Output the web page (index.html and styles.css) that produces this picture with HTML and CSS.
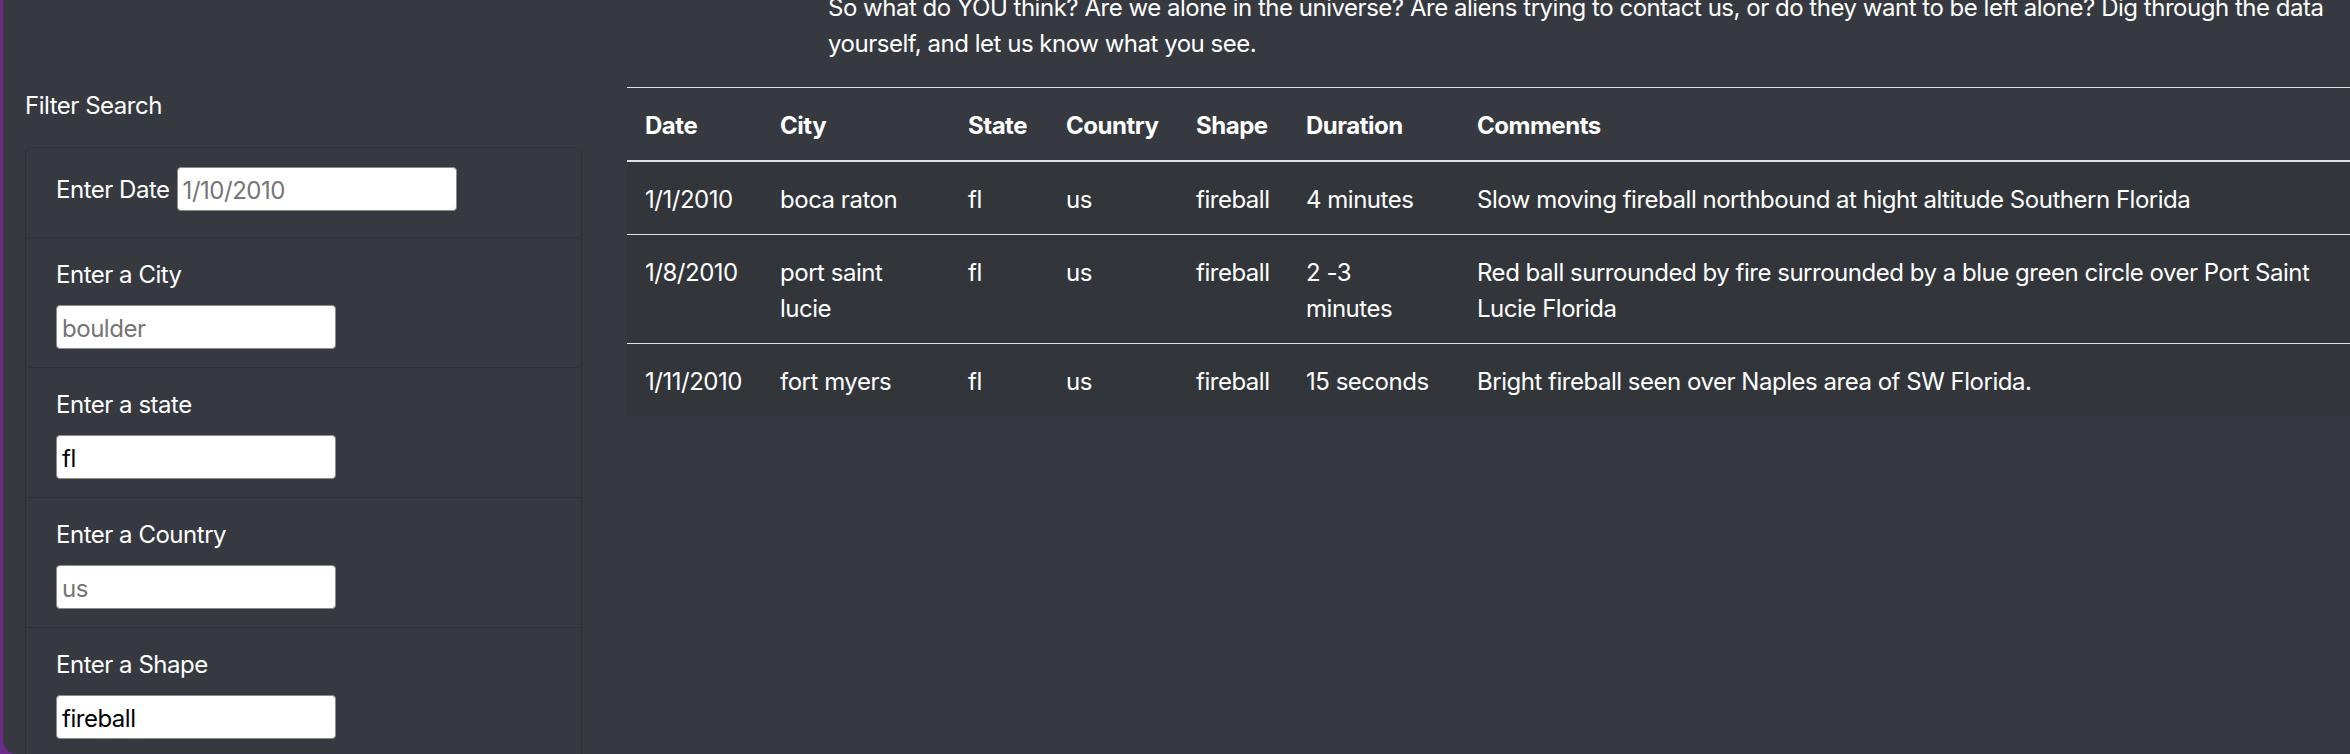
FILE: index.html
```html
<!DOCTYPE html>
<html lang="en">
<head>
<meta charset="utf-8">
<title>UFO Sightings</title>
<link rel="stylesheet" href="styles.css">
</head>
<body>
<div class="window">
  <aside class="sidebar">
    <h2 class="filter-title">Filter Search</h2>
    <ul class="filters">
      <li class="filter filter-inline">
        <label for="datetime">Enter Date</label>
        <input id="datetime" type="text" placeholder="1/10/2010">
      </li>
      <li class="filter">
        <label for="city">Enter a City</label>
        <input id="city" type="text" placeholder="boulder">
      </li>
      <li class="filter">
        <label for="state">Enter a state</label>
        <input id="state" type="text" placeholder="ca" value="fl">
      </li>
      <li class="filter">
        <label for="country">Enter a Country</label>
        <input id="country" type="text" placeholder="us">
      </li>
      <li class="filter">
        <label for="shape">Enter a Shape</label>
        <input id="shape" type="text" placeholder="circle" value="fireball">
      </li>
    </ul>
  </aside>
  <main class="content">
    <p class="intro">So what do YOU think? Are we alone in the universe? Are aliens trying to contact us, or do they want to be left alone? Dig through the data yourself, and let us know what you see.</p>
    <table class="ufo-table">
      <colgroup>
        <col class="c-date"><col class="c-city"><col class="c-state"><col class="c-country"><col class="c-shape"><col class="c-duration"><col>
      </colgroup>
      <thead>
        <tr><th>Date</th><th>City</th><th>State</th><th>Country</th><th>Shape</th><th>Duration</th><th>Comments</th></tr>
      </thead>
      <tbody>
        <tr><td>1/1/2010</td><td>boca raton</td><td>fl</td><td>us</td><td>fireball</td><td>4 minutes</td><td>Slow moving fireball northbound at hight altitude Southern Florida</td></tr>
        <tr><td>1/8/2010</td><td>port saint lucie</td><td>fl</td><td>us</td><td>fireball</td><td>2 -3 minutes</td><td>Red ball surrounded by fire surrounded by a blue green circle over Port Saint Lucie Florida</td></tr>
        <tr><td>1/11/2010</td><td>fort myers</td><td>fl</td><td>us</td><td>fireball</td><td>15 seconds</td><td>Bright fireball seen over Naples area of SW Florida.</td></tr>
      </tbody>
    </table>
  </main>
</div>
</body>
</html>
```

FILE: styles.css
```css
html, body {
  margin: 0;
  padding: 0;
  height: 754px;
  overflow: hidden;
}

body {
  background: #6a2b8a;
  font-family: Inter, "Noto Sans", sans-serif;
  font-size: 24px;
  line-height: 36px;
  letter-spacing: -0.02em;
  color: #ffffff;
}

.window {
  margin-left: 3px;
  height: 754px;
  background: #363a40;
  border-bottom-left-radius: 14px;
  display: grid;
  grid-template-columns: 557px 1fr;
  column-gap: 45px;
  padding-left: 22px;
  overflow: hidden;
}

/* Sidebar */
.sidebar {
  padding-top: 88px;
}

.filter-title {
  margin: 0 0 23px;
  font-size: 24px;
  font-weight: 400;
  line-height: 36px;
}

.filters {
  list-style: none;
  margin: 0;
  padding: 0;
  border: 1px solid rgba(0, 0, 0, 0.16);
  border-radius: 6px;
}

.filter {
  display: flex;
  flex-direction: column;
  align-items: flex-start;
  padding: 19px 30px 18px;
  border-bottom: 1px solid rgba(0, 0, 0, 0.16);
}

.filter label {
  display: block;
  margin-bottom: 12px;
}

.filter-inline {
  flex-direction: row;
  padding: 19px 30px 26px;
}

.filter-inline label {
  margin: 5px 7px 0 0;
}

.filter input {
  box-sizing: border-box;
  width: 280px;
  height: 44px;
  padding: 2px 5px 0;
  border: 1px solid #8d8d8d;
  border-radius: 4px;
  background: #ffffff;
  color: #000000;
  font: inherit;
  letter-spacing: -0.02em;
  line-height: 36px;
}

.filter input::placeholder {
  color: #757575;
}

/* Content */
.content {
  min-width: 0;
}

.intro {
  margin: -10px 0 25px 201px;
}

.ufo-table {
  width: 100%;
  border-collapse: collapse;
  table-layout: fixed;
}

.c-date { width: 135px; }
.c-city { width: 188px; }
.c-state { width: 98px; }
.c-country { width: 130px; }
.c-shape { width: 110px; }
.c-duration { width: 171px; }

.ufo-table th,
.ufo-table td {
  padding: 20px 18px 16px;
  text-align: left;
  vertical-align: top;
  border-top: 1px solid #dee2e6;
}

.ufo-table th {
  font-weight: 700;
  border-bottom: 2px solid #dee2e6;
}

.ufo-table tbody {
  background: #32363b;
}
```
